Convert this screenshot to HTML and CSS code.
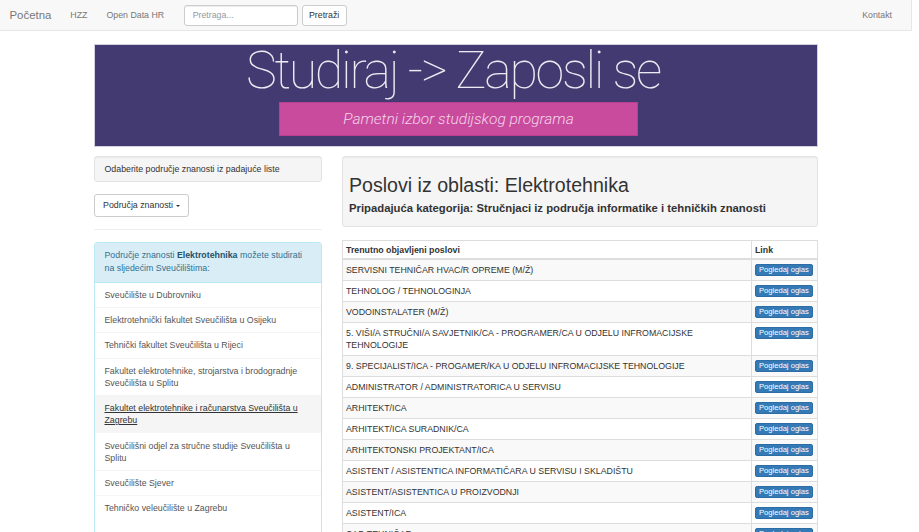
FILE: index.html
```html
<!DOCTYPE html>
<html lang="hr">
<head>
<meta charset="utf-8">
<title>Studiraj -&gt; Zaposli se</title>
<link rel="stylesheet" href="styles.css">
</head>
<body>
<div class="page">
  <nav class="navbar">
    <div class="nav-left">
      <a class="brand" href="#">Početna</a>
      <ul class="nav">
        <li><a href="#">HZZ</a></li>
        <li><a href="#">Open Data HR</a></li>
      </ul>
      <form class="search">
        <input class="search-input" type="text" placeholder="Pretraga...">
        <button class="btn btn-default search-btn" type="button">Pretraži</button>
      </form>
    </div>
    <a class="nav-right" href="#">Kontakt</a>
  </nav>

  <div class="container">
    <div class="banner">
      <div class="banner-title">Studiraj -&gt; Zaposli se</div>
      <div class="banner-sub">Pametni izbor studijskog programa</div>
    </div>

    <div class="row">
      <div class="col-left">
        <div class="well well-small">Odaberite područje znanosti iz padajuće liste</div>
        <button class="btn btn-default dropdown-btn" type="button">Područja znanosti <span class="caret"></span></button>
        <hr class="divider">
        <div class="panel">
          <div class="panel-heading">Područje znanosti <b>Elektrotehnika</b> možete studirati na sljedećim Sveučilištima:</div>
          <ul class="list-group">
            <li class="list-item"><a href="#">Sveučilište u Dubrovniku</a></li>
            <li class="list-item"><a href="#">Elektrotehnički fakultet Sveučilišta u Osijeku</a></li>
            <li class="list-item"><a href="#">Tehnički fakultet Sveučilišta u Rijeci</a></li>
            <li class="list-item"><a href="#">Fakultet elektrotehnike, strojarstva i brodogradnje Sveučilišta u Splitu</a></li>
            <li class="list-item hover"><a href="#">Fakultet elektrotehnike i računarstva Sveučilišta u Zagrebu</a></li>
            <li class="list-item"><a href="#">Sveučilišni odjel za stručne studije Sveučilišta u Splitu</a></li>
            <li class="list-item"><a href="#">Sveučilište Sjever</a></li>
            <li class="list-item"><a href="#">Tehničko veleučilište u Zagrebu</a></li>
          </ul>
        </div>
      </div>

      <div class="col-right">
        <div class="well well-title">
          <h2 class="title">Poslovi iz oblasti: Elektrotehnika</h2>
          <h4 class="subtitle">Pripadajuća kategorija: Stručnjaci iz područja informatike i tehničkih znanosti</h4>
        </div>
        <table class="jobs">
          <thead>
            <tr><th>Trenutno objavljeni poslovi</th><th class="link-col">Link</th></tr>
          </thead>
          <tbody>
            <tr><td>SERVISNI TEHNIČAR HVAC/R OPREME (M/Ž)</td><td><a class="btn-xs" href="#">Pogledaj oglas</a></td></tr>
            <tr><td>TEHNOLOG / TEHNOLOGINJA</td><td><a class="btn-xs" href="#">Pogledaj oglas</a></td></tr>
            <tr><td>VODOINSTALATER (M/Ž)</td><td><a class="btn-xs" href="#">Pogledaj oglas</a></td></tr>
            <tr><td>5. VIŠI/A STRUČNI/A SAVJETNIK/CA - PROGRAMER/CA U ODJELU INFROMACIJSKE TEHNOLOGIJE</td><td><a class="btn-xs" href="#">Pogledaj oglas</a></td></tr>
            <tr><td>9. SPECIJALIST/ICA - PROGAMER/KA U ODJELU INFROMACIJSKE TEHNOLOGIJE</td><td><a class="btn-xs" href="#">Pogledaj oglas</a></td></tr>
            <tr><td>ADMINISTRATOR / ADMINISTRATORICA U SERVISU</td><td><a class="btn-xs" href="#">Pogledaj oglas</a></td></tr>
            <tr><td>ARHITEKT/ICA</td><td><a class="btn-xs" href="#">Pogledaj oglas</a></td></tr>
            <tr><td>ARHITEKT/ICA SURADNIK/CA</td><td><a class="btn-xs" href="#">Pogledaj oglas</a></td></tr>
            <tr><td>ARHITEKTONSKI PROJEKTANT/ICA</td><td><a class="btn-xs" href="#">Pogledaj oglas</a></td></tr>
            <tr><td>ASISTENT / ASISTENTICA INFORMATIČARA U SERVISU I SKLADIŠTU</td><td><a class="btn-xs" href="#">Pogledaj oglas</a></td></tr>
            <tr><td>ASISTENT/ASISTENTICA U PROIZVODNJI</td><td><a class="btn-xs" href="#">Pogledaj oglas</a></td></tr>
            <tr><td>ASISTENT/ICA</td><td><a class="btn-xs" href="#">Pogledaj oglas</a></td></tr>
            <tr><td>CAD TEHNIČAR</td><td><a class="btn-xs" href="#">Pogledaj oglas</a></td></tr>
          </tbody>
        </table>
      </div>
    </div>
  </div>
</div>
</body>
</html>
```

FILE: styles.css
```css
* { box-sizing: border-box; }

html { overflow: hidden; background: #fff; }

body {
  margin: 0;
  font-family: "Liberation Sans", Arial, sans-serif;
  font-size: 8.8px;
  line-height: 12.5px;
  color: #333;
  background: #fff;
}

a { text-decoration: none; }

.page {
  width: 912px;
}

/* Navbar */
.navbar {
  height: 31px;
  background: #f8f8f8;
  border-bottom: 1px solid #e7e7e7;
  border-right: 1px solid #e7e7e7;
  display: flex;
  align-items: center;
  justify-content: space-between;
  padding: 0 9.5px;
}

.nav-left {
  display: flex;
  align-items: center;
}

.brand {
  font-size: 11.4px;
  color: #777;
  padding-right: 9.5px;
}

.nav {
  list-style: none;
  display: flex;
  margin: 0;
  padding: 0;
}

.nav a {
  display: block;
  padding: 0 9.5px;
  color: #777;
}

.search {
  display: flex;
  align-items: center;
  gap: 4px;
  margin-left: 10px;
}

.search-input {
  width: 114px;
  height: 21px;
  border: 1px solid #ccc;
  border-radius: 3px;
  padding: 0 8px;
  font: inherit;
  color: #555;
  background: #fff;
  box-shadow: inset 0 1px 1px rgba(0,0,0,.075);
}

.search-input::placeholder { color: #999; }

.btn {
  font: inherit;
  color: #333;
  background: #fff;
  border: 1px solid #ccc;
  border-radius: 3px;
  cursor: pointer;
}

.search-btn {
  height: 21px;
  width: 45px;
  padding: 0;
}

.nav-right {
  color: #777;
  padding-right: 9.5px;
}

/* Container */
.container {
  width: 724px;
  margin: 13px auto 0;
}

.banner {
  height: 103px;
  background: #423a70;
  border: 1px solid #d3d0e2;
  display: flex;
  flex-direction: column;
  align-items: center;
}

.banner-title {
  font-family: Roboto, "Liberation Sans", sans-serif;
  font-weight: 100;
  font-size: 52px;
  line-height: 52px;
  letter-spacing: -2.3px;
  margin-top: 0;
  color: #ecebf3;
  margin-left: -6px;
}

.banner-sub {
  margin-top: 5px;
  width: 359px;
  height: 34px;
  background: #c84b9d;
  border: 1px solid #b8408e;
  color: #f4d3ea;
  font-family: Roboto, "Liberation Sans", sans-serif;
  font-weight: 300;
  font-style: italic;
  font-size: 15.5px;
  display: flex;
  align-items: center;
  justify-content: center;
  margin-left: 5px;
}

.row {
  display: flex;
  gap: 20px;
  margin-top: 9px;
  align-items: flex-start;
}

.col-left { width: 228px; flex: none; }
.col-right { width: 476px; flex: none; }

.well {
  background: #f5f5f5;
  border: 1px solid #e3e3e3;
  border-radius: 3px;
  box-shadow: inset 0 1px 1px rgba(0,0,0,.05);
}

.well-small {
  height: 26px;
  padding: 6px 9.5px;
}

.dropdown-btn {
  margin-top: 12px;
  height: 23px;
  width: 95px;
  padding: 0;
  display: flex;
  align-items: center;
  justify-content: center;
  gap: 3px;
}

.caret {
  width: 0;
  height: 0;
  border-left: 2.5px solid transparent;
  border-right: 2.5px solid transparent;
  border-top: 2.5px solid #333;
}

.divider {
  border: 0;
  border-top: 1px solid #eee;
  margin: 12px 0;
}

.panel {
  border: 1px solid #bce8f1;
  border-radius: 3px;
  background: #fff;
}

.panel-heading {
  background: #d9edf7;
  color: #31708f;
  padding: 6px 9.5px 6.5px;
  line-height: 13px;
  border-bottom: 1px solid #bce8f1;
}

.panel-heading b { color: #245269; }

.list-group {
  list-style: none;
  margin: 0;
  padding: 0 0 24px;
}

.list-item {
  border-top: 1px solid #f5f5f5;
  line-height: 12px;
}

.list-item:first-child { border-top: 0; }

.list-item a {
  display: block;
  padding: 6.2px 9.5px;
  color: #555;
}

.list-item.hover a {
  background: #f5f5f5;
  color: #333;
  text-decoration: underline;
}

/* Right */
.well-title {
  height: 71px;
  padding: 16px 6px 0;
}

.title {
  margin: 0;
  font-size: 19.6px;
  line-height: 24px;
  font-weight: normal;
  color: #333;
}

.subtitle {
  margin: 4px 0 0;
  font-size: 11.3px;
  line-height: 14px;
  font-weight: bold;
  color: #333;
}

.jobs {
  margin-top: 13px;
  width: 476px;
  border-collapse: collapse;
  border: 1px solid #ddd;
}

.jobs th, .jobs td {
  border: 1px solid #ddd;
  text-align: left;
  vertical-align: top;
  padding: 4px 3px;
  line-height: 12px;
}

.jobs th {
  padding: 3px 3px 2px;
  border-bottom: 2px solid #ddd;
  font-weight: bold;
}

.jobs .link-col { width: 66px; }

.jobs tbody tr:nth-child(odd) td { background: #f9f9f9; }

.btn-xs {
  display: inline-block;
  vertical-align: top;
  height: 12px;
  margin: 0;
  padding: 0 3px;
  line-height: 10px;
  font-size: 7.6px;
  color: #fff;
  background: #337ab7;
  border: 1px solid #2e6da4;
  border-radius: 2px;
  white-space: nowrap;
}
```
